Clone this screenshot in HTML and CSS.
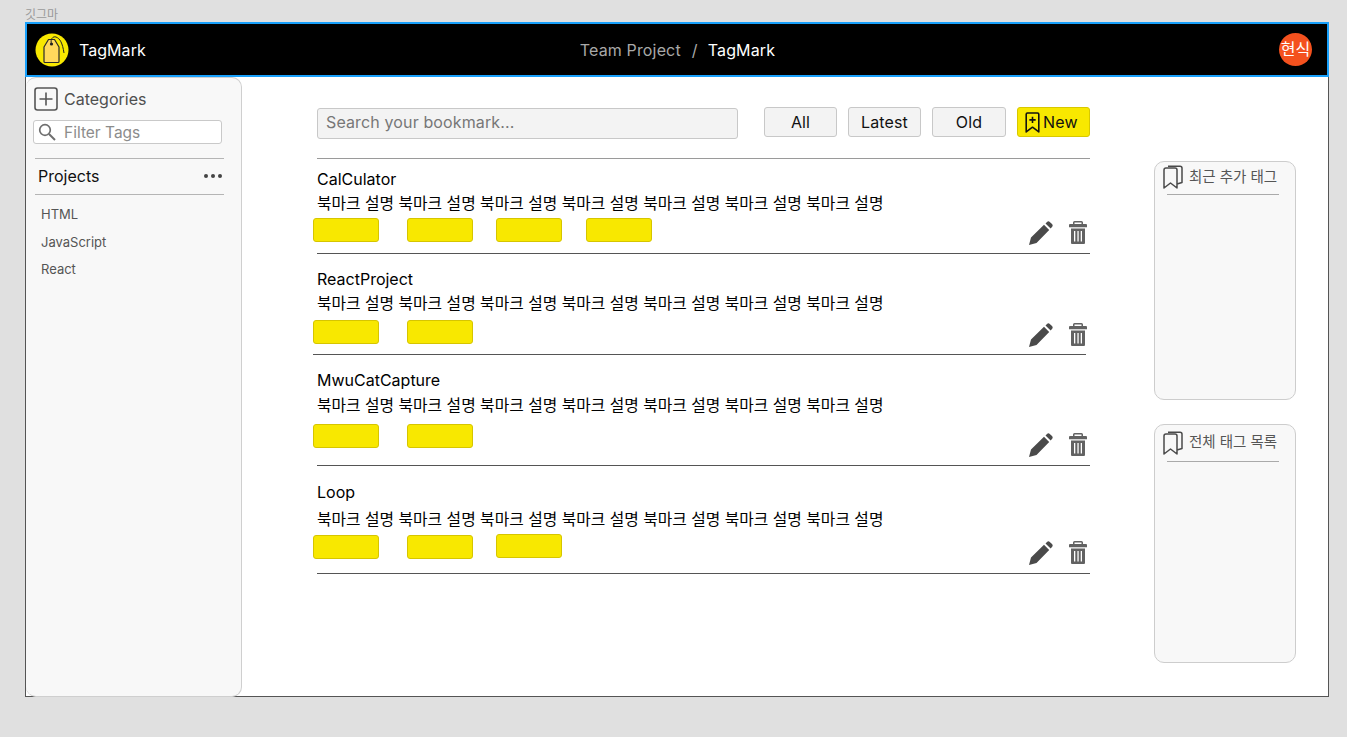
FILE: index.html
```html
<!DOCTYPE html>
<html lang="ko">
<head>
<meta charset="utf-8">
<title>TagMark</title>
<link rel="stylesheet" href="styles.css">
</head>
<body>
<svg class="sprites" width="0" height="0" aria-hidden="true">
  <defs>
    <symbol id="i-edit" viewBox="0 0 24 24"><path d="M0 24L2 16.500 15 3.800 20.200 9 7.500 22zM16.500 2.400L18 .900a2 2 0 0 1 2.800 0L23 3.100a2 2 0 0 1 0 2.800L21.600 7.500z"/></symbol>
    <symbol id="i-trash" viewBox="0 0 18 23"><path fill-rule="evenodd" d="M5.500 0h7a1.500 1.500 0 0 1 1.500 1.500V3h3a1 1 0 0 1 1 1v2.200H0V4a1 1 0 0 1 1-1h3V1.500A1.500 1.500 0 0 1 5.500 0zM5.500 1.400V3h7V1.400zM2 7.500h14V22a1 1 0 0 1-1 1H3a1 1 0 0 1-1-1zM5 10v10.500h1.300V10zM8.400 10v10.500h1.300V10zM11.700 10v10.500h1.300V10z"/></symbol>
    <symbol id="i-books" viewBox="0 0 20 24"><path d="M1 5a2 2 0 0 1 2-2h9a2 2 0 0 1 2 2v18l-6.500-5-6.500 5z M5 1.200h12a2 2 0 0 1 2 2V17.500l-5 1.500" fill="none" stroke="currentColor" stroke-width="1.500" stroke-linejoin="round"/></symbol>
  </defs>
</svg>
<div class="canvas-label">깃그마</div>
<div class="frame">
  <header class="topbar">
    <div class="brand">
      <svg class="logo" viewBox="0 0 34 34">
        <circle cx="17" cy="17" r="16.500" fill="#f8e800"/>
        <path d="M9 14l4.500-7.500h6L24 14V28.500a1 1 0 0 1-1 1H10a1 1 0 0 1-1-1z" fill="#ffd95c" stroke="#2a2a2a" stroke-width="1.200" stroke-linejoin="round"/>
        <circle cx="16.500" cy="11" r="1.600" fill="#222"/>
        <path d="M16.500 11C15 6 18 3 21 4c4 1.500 6.500 6 8 16" fill="none" stroke="#222" stroke-width="1"/>
      </svg>
      <span class="brand-name">TagMark</span>
    </div>
    <div class="crumbs"><span class="crumb-dim">Team Project</span><span class="crumb-sep">/</span><span>TagMark</span></div>
    <div class="avatar">현식</div>
  </header>
  <div class="workspace">
    <aside class="sidebar">
      <div class="cat-head">
        <svg class="cat-plus" viewBox="0 0 24 24"><rect x="1" y="1" width="22" height="22" rx="2.500" fill="none" stroke="currentColor" stroke-width="1.600"/><path d="M12 5.500v13M5.500 12h13" stroke="currentColor" stroke-width="1.600"/></svg>
        <span>Categories</span>
      </div>
      <div class="filter">
        <svg class="filter-icon" viewBox="0 0 18 18"><circle cx="7" cy="7" r="5.300" fill="none" stroke="currentColor" stroke-width="1.700"/><path d="M11 11l6 6" stroke="currentColor" stroke-width="2"/></svg>
        <span>Filter Tags</span>
      </div>
      <div class="projects-head">
        <span>Projects</span>
        <span class="dots"><i></i><i></i><i></i></span>
      </div>
      <ul class="project-list">
        <li>HTML</li>
        <li>JavaScript</li>
        <li>React</li>
      </ul>
    </aside>
    <main class="content">
      <div class="toolbar">
        <div class="search">Search your bookmark...</div>
        <button class="btn">All</button>
        <button class="btn">Latest</button>
        <button class="btn btn-old">Old</button>
        <button class="btn btn-new">
          <svg class="new-icon" viewBox="0 0 14 20"><path d="M1 2.200a1.200 1.200 0 0 1 1.200-1.200h9.600A1.200 1.200 0 0 1 13 2.200V19l-6-4.500L1 19z" fill="none" stroke="currentColor" stroke-width="1.500" stroke-linejoin="round"/><path d="M7 4.500v6M4 7.500h6" stroke="currentColor" stroke-width="1.500"/></svg>
          New
        </button>
      </div>
      <section class="item item-1">
        <h3 class="item-title">CalCulator</h3>
        <p class="item-desc">북마크 설명 북마크 설명 북마크 설명 북마크 설명 북마크 설명 북마크 설명 북마크 설명</p>
        <div class="item-foot">
          <span class="tag"></span><span class="tag"></span><span class="tag"></span><span class="tag"></span>
          <div class="actions"><svg class="ic-edit"><use href="#i-edit"/></svg><svg class="ic-trash"><use href="#i-trash"/></svg></div>
        </div>
      </section>
      <section class="item item-2">
        <h3 class="item-title">ReactProject</h3>
        <p class="item-desc">북마크 설명 북마크 설명 북마크 설명 북마크 설명 북마크 설명 북마크 설명 북마크 설명</p>
        <div class="item-foot">
          <span class="tag"></span><span class="tag"></span>
          <div class="actions"><svg class="ic-edit"><use href="#i-edit"/></svg><svg class="ic-trash"><use href="#i-trash"/></svg></div>
        </div>
      </section>
      <section class="item item-3">
        <h3 class="item-title">MwuCatCapture</h3>
        <p class="item-desc">북마크 설명 북마크 설명 북마크 설명 북마크 설명 북마크 설명 북마크 설명 북마크 설명</p>
        <div class="item-foot">
          <span class="tag"></span><span class="tag"></span>
          <div class="actions"><svg class="ic-edit"><use href="#i-edit"/></svg><svg class="ic-trash"><use href="#i-trash"/></svg></div>
        </div>
      </section>
      <section class="item item-4">
        <h3 class="item-title">Loop</h3>
        <p class="item-desc">북마크 설명 북마크 설명 북마크 설명 북마크 설명 북마크 설명 북마크 설명 북마크 설명</p>
        <div class="item-foot">
          <span class="tag"></span><span class="tag"></span><span class="tag"></span>
          <div class="actions"><svg class="ic-edit"><use href="#i-edit"/></svg><svg class="ic-trash"><use href="#i-trash"/></svg></div>
        </div>
      </section>
    </main>
    <aside class="tag-panels">
      <section class="panel panel-recent">
        <div class="panel-head"><svg class="ic-books"><use href="#i-books"/></svg><span>최근 추가 태그</span></div>
        <div class="panel-rule"></div>
      </section>
      <section class="panel panel-all">
        <div class="panel-head"><svg class="ic-books"><use href="#i-books"/></svg><span>전체 태그 목록</span></div>
        <div class="panel-rule"></div>
      </section>
    </aside>
  </div>
</div>
</body>
</html>
```

FILE: styles.css
```css
* { box-sizing: border-box; }
html, body { margin: 0; height: 100%; }
body {
  background: #e0e0e0;
  font-family: Inter, "Noto Sans CJK KR", sans-serif;
  color: #000;
  padding: 8px 18px 0 25px;
  overflow: hidden;
}
.sprites { display: block; height: 0; }
.canvas-label { font-size: 12px; line-height: 14px; color: #9a9a9a; }
.frame { width: 1304px; height: 675px; display: flex; flex-direction: column; background: #fff; }

.topbar {
  height: 55px;
  flex: none;
  background: #000;
  border: 2px solid #18a0fb;
  display: grid;
  grid-template-columns: 1fr auto 1fr;
  align-items: center;
  padding: 0 15px 0 8px;
  color: #fff;
}
.brand { display: flex; align-items: center; gap: 10px; }
.logo { width: 34px; height: 34px; display: block; }
.brand-name { font-size: 16px; letter-spacing: .05px; }
.crumbs { display: flex; font-size: 16px; gap: 11px; padding-left: 8px; letter-spacing: .15px; }
.crumb-dim, .crumb-sep { color: #a8a8a8; }
.crumb-sep { margin-right: -1px; }
.avatar {
  justify-self: end;
  width: 33px; height: 33px;
  border-radius: 50%;
  background: #f4511e;
  font-size: 16px;
  line-height: 33px;
  text-align: center;
  white-space: nowrap;
}

.workspace { flex: 1; display: flex; min-height: 0; border: 1px solid #555; border-top: 0; }

.sidebar {
  flex: none;
  width: 216px;
  margin-bottom: -1px;
  background: #f8f8f8;
  border: 1px solid #cfcfcf;
  border-left: 0;
  border-radius: 10px;
  padding: 9px 18px 0 8px;
  color: #4f4f4f;
}
.cat-head { display: flex; align-items: center; gap: 6px; font-size: 16px; height: 24px; }
.cat-plus { width: 24px; height: 24px; color: #555; flex: none; }
.filter {
  margin-top: 9px;
  margin-left: -1px;
  height: 24px;
  width: 189px;
  border: 1px solid #c9c9c9;
  border-radius: 3px;
  background: #fff;
  display: flex;
  align-items: center;
  gap: 8px;
  padding-left: 4px;
  font-size: 15.500px;
  color: #8c8c8c;
}
.filter-icon { width: 18px; height: 18px; color: #6e6e6e; flex: none; }
.projects-head {
  margin-top: 14px;
  margin-left: 1px;
  width: 189px;
  height: 37px;
  border-top: 1px solid #b5b5b5;
  border-bottom: 1px solid #b5b5b5;
  display: flex;
  align-items: center;
  justify-content: space-between;
  padding: 0 2px 2px 3px;
  font-size: 16px;
  color: #111;
}
.dots { display: flex; gap: 3px; }
.dots i { width: 4px; height: 4px; border-radius: 50%; background: #444; display: block; }
.project-list { list-style: none; margin: 6px 0 0; padding: 0 0 0 7px; font-size: 13px; color: #555; }
.project-list li { height: 27.500px; line-height: 27.500px; }

.content { flex: none; width: 848px; padding: 30px 0 0 75px; }
.toolbar {
  display: flex;
  align-items: flex-start;
  height: 52px;
  width: 773px;
  border-bottom: 1px solid #9a9a9a;
}
.search {
  width: 421px;
  height: 31px;
  margin-top: 1px;
  background: #f3f3f3;
  border: 1px solid #c8c8c8;
  border-radius: 3px;
  font-size: 16px;
  line-height: 27px;
  letter-spacing: .13px;
  padding-left: 8px;
  color: #777;
  margin-right: 26px;
}
.btn {
  width: 73px;
  height: 30px;
  background: #f3f3f3;
  border: 1px solid #c8c8c8;
  border-radius: 3px;
  font: inherit;
  font-size: 16px;
  letter-spacing: .15px;
  color: #111;
  padding: 0;
  margin-right: 11px;
}
.btn-old { width: 74px; }
.btn-new {
  background: #f8e800;
  border-color: #d8c800;
  margin: 0;
  display: flex;
  align-items: center;
  justify-content: flex-start;
  gap: 3px;
  padding-left: 7px;
}
.new-icon { width: 15px; height: 21px; }

.item { width: 773px; border-bottom: 1px solid #555; }
.item-title { margin: 0; font-size: 16px; font-weight: 400; line-height: 20px; }
.item-desc { margin: 0; font-size: 15.800px; line-height: 20px; white-space: nowrap; }
.item-foot { display: flex; margin-left: -4px; align-items: flex-start; }
.tag {
  width: 66px;
  height: 24px;
  background: #f8e800;
  border: 1px solid #d6c500;
  border-radius: 3px;
  margin-right: 28px;
}
.tag:nth-child(2) { margin-right: 23px; }
.tag:nth-child(3) { margin-right: 24px; }
.actions { margin-left: auto; display: flex; align-items: flex-start; gap: 16px; padding-right: 3px; }
.ic-edit { width: 24px; height: 24px; fill: #4a4a4a; }
.ic-trash { width: 18px; height: 23px; fill: #626262; }

.item-1 { height: 95px; padding-top: 10px; }
.item-1 .item-desc { margin-top: 5px; }
.item-1 .item-foot { margin-top: 4px; }
.item-1 .actions { margin-top: 3px; }
.item-2 { height: 101px; padding-top: 15px; margin-left: -4px; }
.item-2 .item-title, .item-2 .item-desc { margin-left: 4px; }
.item-2 .item-desc { margin-top: 5px; }
.item-2 .item-foot { margin-left: 0; margin-top: 6px; }
.item-2 .actions { margin-top: 3px; margin-right: -4px; }
.item-3 { height: 111px; padding-top: 15px; }
.item-3 .item-desc { margin-top: 6px; }
.item-3 .item-foot { margin-top: 8px; }
.item-3 .actions { margin-top: 9px; }
.item-4 { height: 108px; padding-top: 16px; }
.item-4 .item-desc { margin-top: 8px; }
.item-4 .item-foot { margin-top: 5px; }
.item-4 .tag:nth-child(3) { margin-top: -1px; }
.item-4 .actions { margin-top: 6px; }

.tag-panels { flex: none; margin-left: 64px; padding-top: 84px; display: flex; flex-direction: column; gap: 24px; }
.panel {
  width: 142px;
  height: 239px;
  background: #f8f8f8;
  border: 1px solid #cdcdcd;
  border-radius: 10px;
  padding: 3px 0 0 8px;
  color: #555;
}
.panel-all { padding-top: 6px; }
.panel-head {
  display: flex;
  align-items: center;
  gap: 6px;
  height: 24px;
  font-size: 14.500px;
  white-space: nowrap;
}
.panel-head span { position: relative; top: -2px; }
.panel-all .panel-head span { top: -3px; }
.panel-rule { height: 1px; background: #aaa; width: 112px; margin: 5px 0 0 4px; }
.panel-all .panel-rule { margin-top: 6px; }
.ic-books { width: 20px; height: 24px; color: #4a4a4a; flex: none; }
```
